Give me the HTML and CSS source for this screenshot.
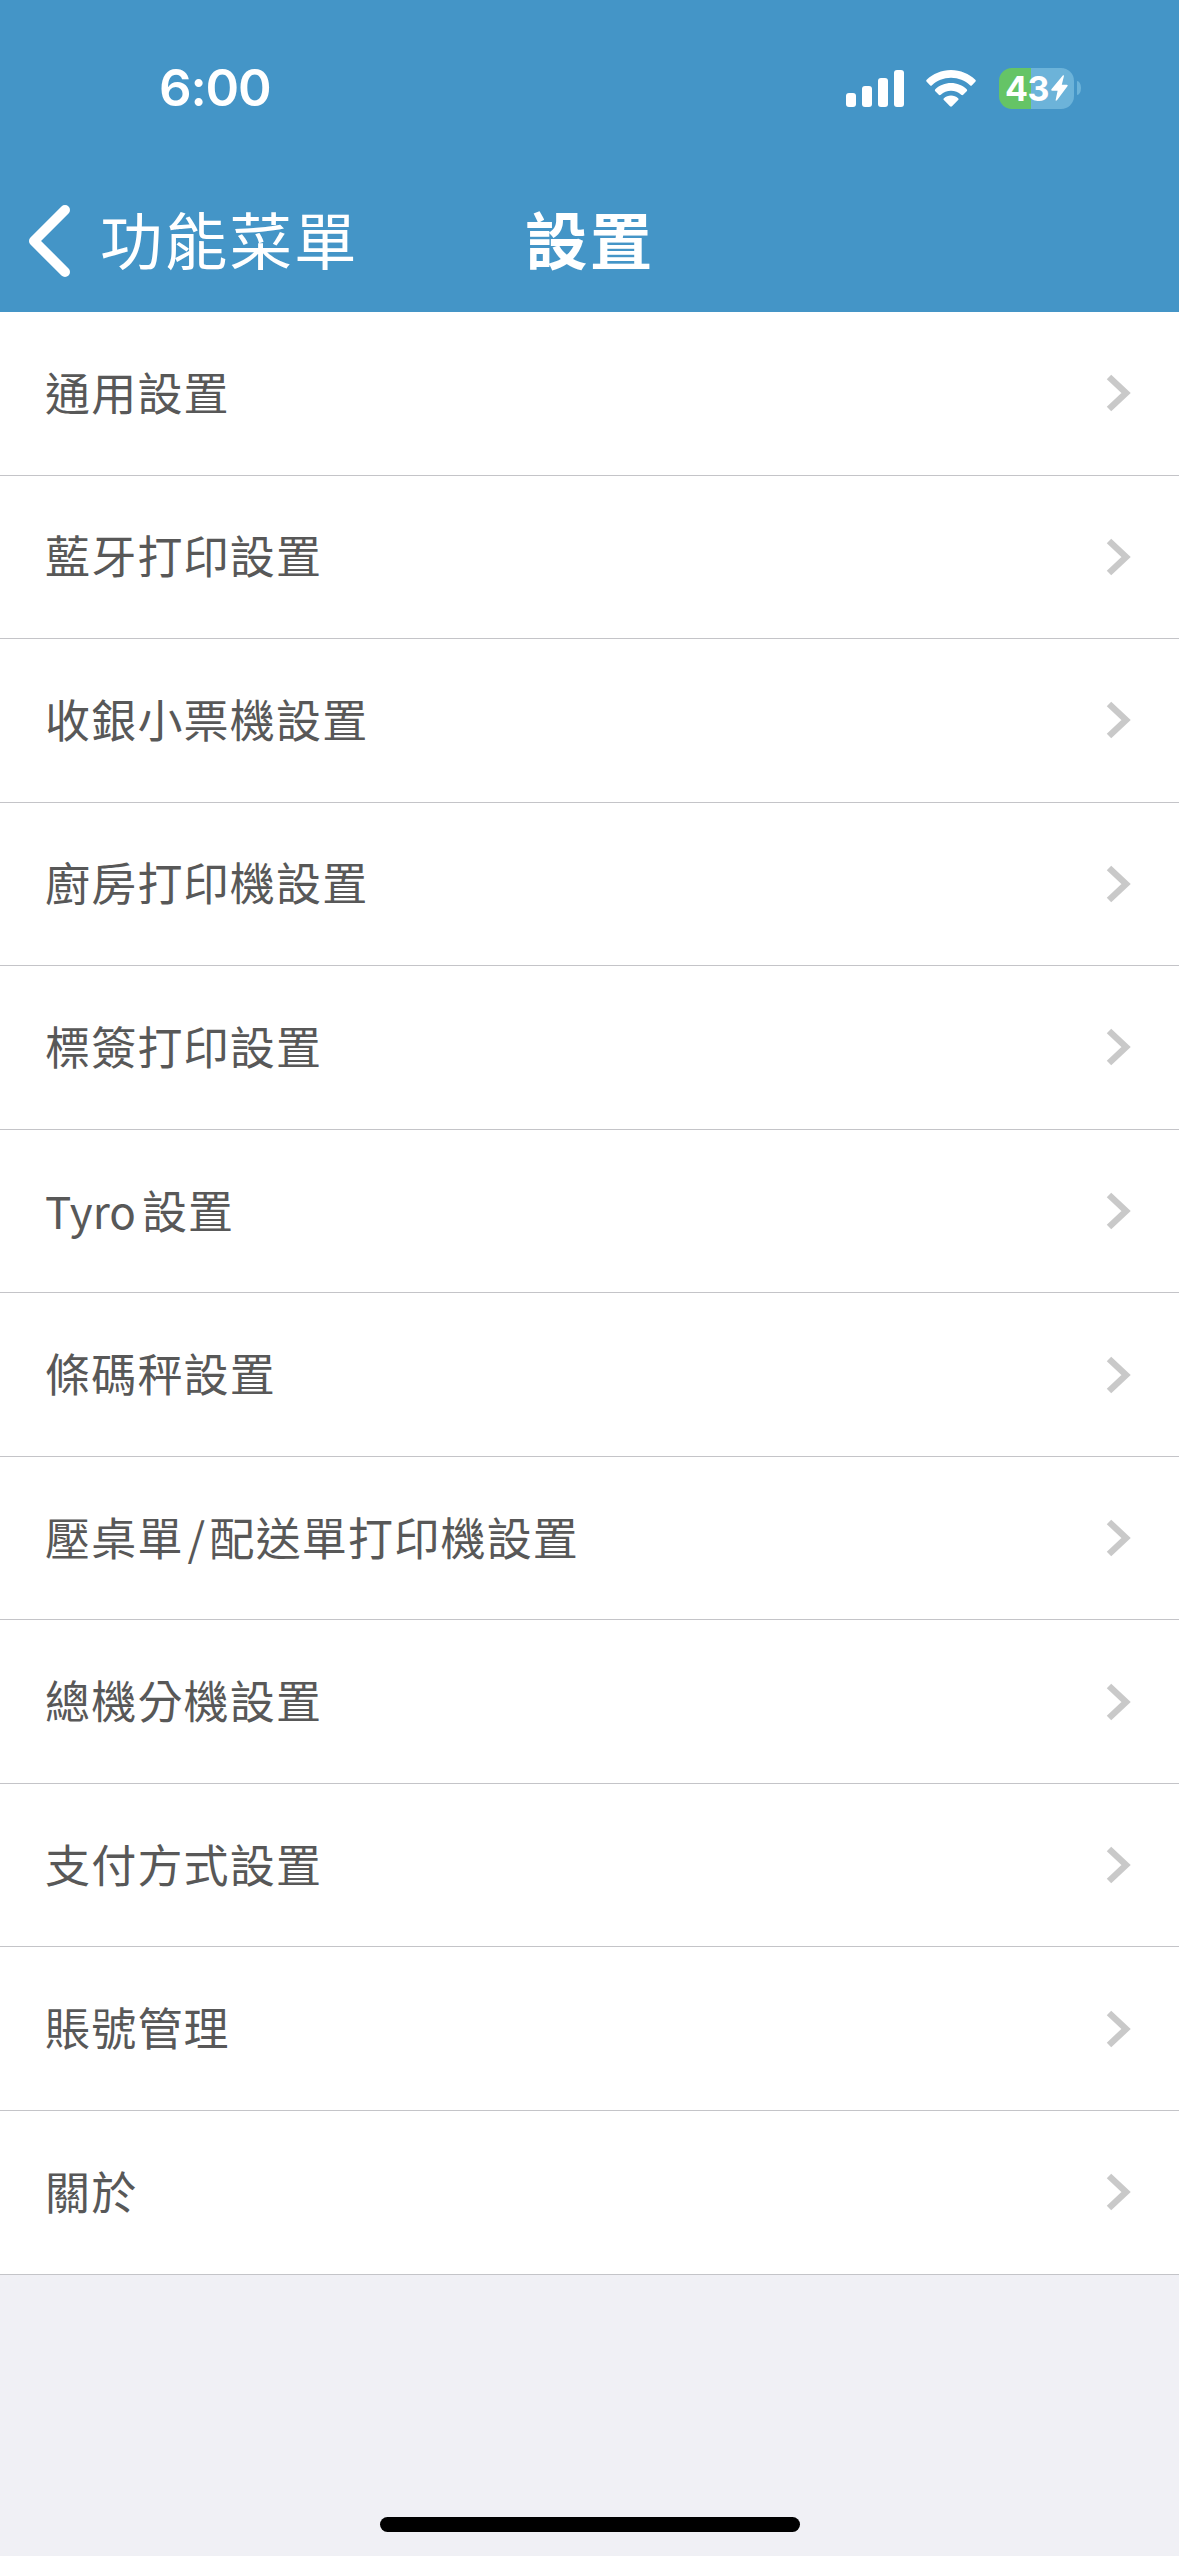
FILE: index.html
```html
<!DOCTYPE html>
<html lang="zh-Hant">
<head>
  <meta charset="UTF-8">
  <title>設置</title>
  <link rel="stylesheet" href="styles.css">
</head>
<body>
  <header>
    <div class="status">
      <span class="time">6:00</span>
      <div class="status-icons">
        <svg class="signal" width="58" height="37" viewBox="0 0 58 37" fill="#fff">
          <rect x="0" y="23" width="10" height="14" rx="3"/>
          <rect x="16" y="16" width="10" height="21" rx="3"/>
          <rect x="32" y="8" width="10" height="29" rx="3"/>
          <rect x="48" y="0" width="10" height="37" rx="3"/>
        </svg>
        <svg class="wifi" width="50" height="37" viewBox="0 0 50 37" fill="#fff">
          <path d="M25 0C34.500 0 43 3.800 49.300 9.700Q50.300 10.800 49.300 11.800L46 15.200Q45 16.200 44 15.200C39 10.500 32.500 7.700 25 7.700S11 10.500 6 15.200Q5 16.200 4 15.200L.7 11.800Q-.3 10.800 .7 9.700C7 3.800 15.500 0 25 0Z"/>
          <path d="M25 13C31 13 36.500 15.300 40.700 19.200Q41.700 20.200 40.700 21.200L37.200 24.700Q36.200 25.600 35.200 24.700C32.400 22.200 28.900 20.700 25 20.700S17.600 22.200 14.800 24.700Q13.800 25.600 12.800 24.700L9.300 21.200Q8.300 20.200 9.300 19.200C13.500 15.300 19 13 25 13Z"/>
          <path d="M25 25.600C27.700 25.600 30.200 26.600 32.100 28.300Q33 29.200 32.100 30.100L26 36.300Q25 37.200 24 36.300L17.900 30.100Q17 29.200 17.900 28.300C19.800 26.600 22.300 25.600 25 25.600Z"/>
        </svg>
        <div class="battery">
          <span>43</span>
          <svg width="17" height="26" viewBox="0 0 17 26" fill="#fff">
            <path d="M12 .3Q13.200-.3 12.900 1.200L10.800 9.700H15.700Q17.300 9.800 16.400 11.200L6 25.300Q4.500 26.500 4.700 24.800L6.600 15.700H1.300Q-.4 15.500 .6 14Z"/>
          </svg>
        </div>
        <div class="battery-tip"></div>
      </div>
    </div>
    <div class="nav">
      <div class="back">
        <svg width="42" height="72" viewBox="0 0 42 72" fill="none" stroke="#fff" stroke-width="10" stroke-linecap="round" stroke-linejoin="round">
          <path d="M37 5L6 36L37 67"/>
        </svg>
        <span>功能菜單</span>
      </div>
      <h1>設置</h1>
    </div>
  </header>

  <ul class="list">
    <li><span>通用設置</span><svg class="arrow" viewBox="0 0 26 38"><path d="M3 3L20 19L3 35"/></svg></li>
    <li><span>藍牙打印設置</span><svg class="arrow" viewBox="0 0 26 38"><path d="M3 3L20 19L3 35"/></svg></li>
    <li><span>收銀小票機設置</span><svg class="arrow" viewBox="0 0 26 38"><path d="M3 3L20 19L3 35"/></svg></li>
    <li><span>廚房打印機設置</span><svg class="arrow" viewBox="0 0 26 38"><path d="M3 3L20 19L3 35"/></svg></li>
    <li><span>標簽打印設置</span><svg class="arrow" viewBox="0 0 26 38"><path d="M3 3L20 19L3 35"/></svg></li>
    <li><span><span class="latin">Tyro</span>設置</span><svg class="arrow" viewBox="0 0 26 38"><path d="M3 3L20 19L3 35"/></svg></li>
    <li><span>條碼秤設置</span><svg class="arrow" viewBox="0 0 26 38"><path d="M3 3L20 19L3 35"/></svg></li>
    <li><span>壓桌單<span class="slash">/</span>配送單打印機設置</span><svg class="arrow" viewBox="0 0 26 38"><path d="M3 3L20 19L3 35"/></svg></li>
    <li><span>總機分機設置</span><svg class="arrow" viewBox="0 0 26 38"><path d="M3 3L20 19L3 35"/></svg></li>
    <li><span>支付方式設置</span><svg class="arrow" viewBox="0 0 26 38"><path d="M3 3L20 19L3 35"/></svg></li>
    <li><span>賬號管理</span><svg class="arrow" viewBox="0 0 26 38"><path d="M3 3L20 19L3 35"/></svg></li>
    <li><span>關於</span><svg class="arrow" viewBox="0 0 26 38"><path d="M3 3L20 19L3 35"/></svg></li>
  </ul>

  <div class="home-bar"></div>
</body>
</html>
```
FILE: styles.css
```css
* {
  box-sizing: border-box;
}
body {
  margin: 0;
  height: 2556px;
  display: flex;
  flex-direction: column;
  background: #f0f0f5;
  font-family: "Noto Sans CJK TC", sans-serif;
  overflow: hidden;
}
header {
  height: 312px;
  background: #4495c7;
  color: #fff;
}
.status {
  height: 176px;
  padding: 0 98px 0 159px;
  display: flex;
  justify-content: space-between;
  align-items: center;
}
.time {
  font: 600 51px/60px Inter, sans-serif;
  letter-spacing: -1.2px;
}
.status-icons {
  display: flex;
  align-items: center;
}
.wifi {
  margin: 0 23px 0 22px;
}
.battery {
  width: 75px;
  height: 41px;
  border-radius: 13px;
  background: linear-gradient(to right, #65c466 32px, #6cb3d9 32px);
  display: flex;
  align-items: center;
  justify-content: center;
  gap: 2px;
  font: 700 34px/41px Inter, sans-serif;
}
.battery span {
  letter-spacing: -0.5px;
}
.battery-tip {
  width: 4px;
  height: 14px;
  margin-left: 3px;
  border-radius: 0 4px 4px 0 / 0 7px 7px 0;
  background: #6cb3d9;
}
.nav {
  height: 136px;
  padding-left: 28px;
  padding-bottom: 6px;
  display: grid;
  grid-template-columns: 497px 1fr;
  align-items: center;
}
.back {
  display: flex;
  align-items: center;
  font-size: 62.5px;
  line-height: 80px;
  letter-spacing: 2.2px;
}
.back svg {
  margin-right: 30px;
}
.back span {
  padding-bottom: 7px;
}
h1 {
  margin: 0;
  padding-bottom: 7px;
  font-size: 62.5px;
  line-height: 80px;
  font-weight: 700;
  letter-spacing: 2.2px;
}
.list {
  margin: 0;
  padding: 0;
  list-style: none;
}
.list li {
  height: 163.55px;
  padding: 0 47px 0 45px;
  display: flex;
  align-items: center;
  justify-content: space-between;
  background: #fff;
  border-bottom: 1px solid #c4c4c8;
  color: #585858;
  font-size: 45px;
  line-height: 64px;
  letter-spacing: 1.2px;
}
.list li > span {
  padding-bottom: 3px;
}
.arrow {
  width: 26px;
  height: 38px;
  fill: none;
  stroke: #c9c9c9;
  stroke-width: 6.500;
}
.latin {
  margin-right: 6px;
  font-size: 44px;
  letter-spacing: 0;
}
.slash {
  margin: 0 3px 0 4px;
}
.home-bar {
  width: 420px;
  height: 15px;
  margin: auto auto 24px;
  border-radius: 8px;
  background: #000;
}
```
